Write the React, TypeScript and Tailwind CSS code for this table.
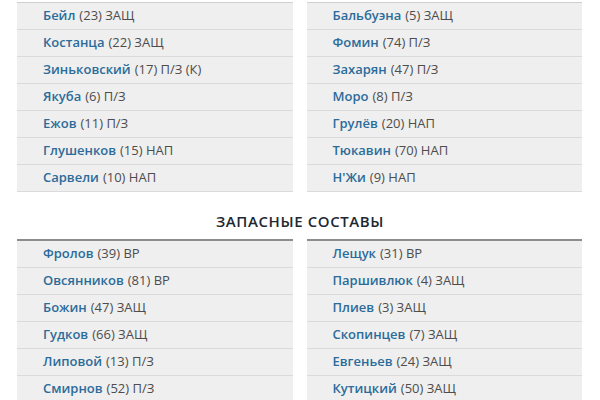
import React from "react";

const main: [string, string][][] = [
  [
    ["Бейл", "(23) ЗАЩ"],
    ["Костанца", "(22) ЗАЩ"],
    ["Зиньковский", "(17) П/З (К)"],
    ["Якуба", "(6) П/З"],
    ["Ежов", "(11) П/З"],
    ["Глушенков", "(15) НАП"],
    ["Сарвели", "(10) НАП"],
  ],
  [
    ["Бальбуэна", "(5) ЗАЩ"],
    ["Фомин", "(74) П/З"],
    ["Захарян", "(47) П/З"],
    ["Моро", "(8) П/З"],
    ["Грулёв", "(20) НАП"],
    ["Тюкавин", "(70) НАП"],
    ["Н'Жи", "(9) НАП"],
  ],
];

const subs: [string, string][][] = [
  [
    ["Фролов", "(39) ВР"],
    ["Овсянников", "(81) ВР"],
    ["Божин", "(47) ЗАЩ"],
    ["Гудков", "(66) ЗАЩ"],
    ["Липовой", "(13) П/З"],
    ["Смирнов", "(52) П/З"],
  ],
  [
    ["Лещук", "(31) ВР"],
    ["Паршивлюк", "(4) ЗАЩ"],
    ["Плиев", "(3) ЗАЩ"],
    ["Скопинцев", "(7) ЗАЩ"],
    ["Евгеньев", "(24) ЗАЩ"],
    ["Кутицкий", "(50) ЗАЩ"],
  ],
];

function Col({ rows, top }: { rows: [string, string][]; top: string }) {
  return (
    <ul className={`flex-1 ${top}`}>
      {rows.map(([n, r]) => (
        <li
          key={n}
          className="h-[27px] flex items-center pl-[26px] bg-[#efefef] border-b border-[#dadada] text-[13px] text-[#4d4d4d]"
        >
          <span className="font-semibold text-[#2b6c9a]">{n}</span>
          <span className="ml-[4px]">{r}</span>
        </li>
      ))}
    </ul>
  );
}

export default function App() {
  return (
    <div
      className="w-[600px] h-[400px] overflow-hidden bg-white pt-[2px]"
      style={{ fontFamily: '"Open Sans", "Noto Sans", sans-serif' }}
    >
      <div className="flex gap-[14px] pl-[17px] pr-[18px]">
        <Col rows={main[0]} top="border-t border-[#cfcfcf]" />
        <Col rows={main[1]} top="border-t border-[#cfcfcf]" />
      </div>
      <h2 className="text-center text-[15px] font-semibold tracking-[0.6px] text-[#1d2833] mt-[19px] mb-[8px] leading-[20px]">
        ЗАПАСНЫЕ СОСТАВЫ
      </h2>
      <div className="flex gap-[14px] pl-[17px] pr-[18px]">
        <Col rows={subs[0]} top="border-t-2 border-[#8c8c8c]" />
        <Col rows={subs[1]} top="border-t-2 border-[#8c8c8c]" />
      </div>
    </div>
  );
}
